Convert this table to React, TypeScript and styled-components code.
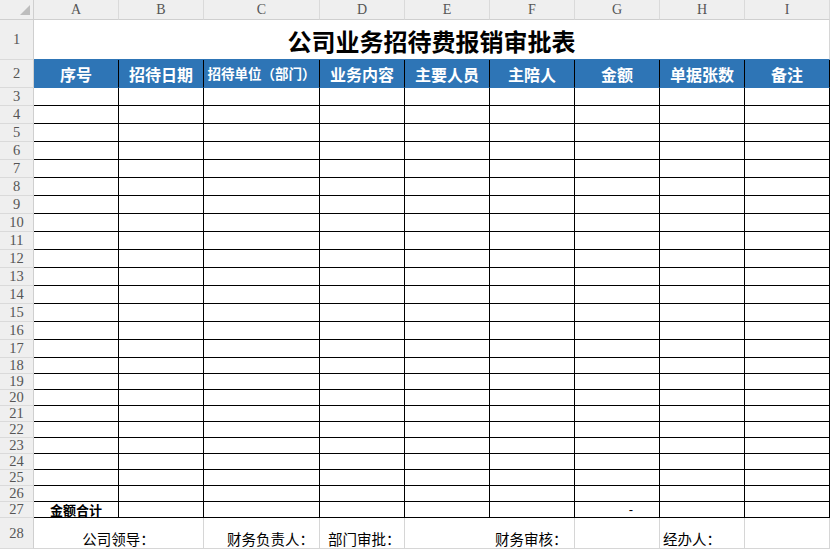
import React from "react";
import styled, { createGlobalStyle, css } from "styled-components";

const Global = createGlobalStyle`
  html, body { margin: 0; padding: 0; background: #ffffff; overflow: hidden; }
  * { box-sizing: border-box; }
`;

const CJK = `"Noto Sans CJK SC", "Noto Sans", sans-serif`;
const HEAD_FONT = `"Liberation Serif", "DejaVu Serif", serif`;
const BLUE = "#2E75B6";
const GRID = "#d6d6d6";

const Sheet = styled.div`
  display: grid;
  grid-template-columns: 34px 85px 85px 116px repeat(6, 85px);
  grid-template-rows: 20px 40px 28px repeat(15, 18px) repeat(10, 16px) 31px;
  width: 830px;
  height: 549px;
  background: #fff;
  font-family: ${CJK};
`;

const Corner = styled.div`
  position: relative;
  background: #efefef;
  border-right: 1px solid #cfcfcf;
  border-bottom: 1px solid #cfcfcf;
  &::after {
    content: "";
    position: absolute;
    left: 20px;
    top: 5px;
    width: 0;
    height: 0;
    border-left: 10px solid transparent;
    border-bottom: 10px solid #bdbdbd;
  }
`;

const ColHead = styled.div`
  display: flex;
  align-items: center;
  justify-content: center;
  background: #efefef;
  border-right: 1px solid #dadada;
  border-bottom: 1px solid #cfcfcf;
  font-family: ${HEAD_FONT};
  font-size: 14px;
  line-height: 1;
  color: #555;
  padding-top: 1px;
`;

const RowHead = styled.div`
  display: flex;
  align-items: center;
  justify-content: center;
  background: #efefef;
  border-right: 1px solid #cfcfcf;
  border-bottom: 1px solid #dadada;
  font-family: ${HEAD_FONT};
  font-size: 14.5px;
  line-height: 1;
  color: #555;
  overflow: hidden;
`;

const TitleCell = styled.div`
  grid-column: span 9;
  display: flex;
  align-items: center;
  justify-content: center;
  border-right: 1px solid ${GRID};
  border-bottom: 1px solid ${BLUE};
  font-size: 24px;
  font-weight: 700;
  color: #000;
  padding-top: 1px;
`;

const HeadCell = styled.div<{ $small?: boolean }>`
  display: flex;
  align-items: center;
  justify-content: center;
  background: ${BLUE};
  border-right: 1px solid #000;
  border-bottom: 1px solid ${BLUE};
  color: #fff;
  font-weight: 700;
  font-size: ${(p) => (p.$small ? "13.5px" : "16px")};
  line-height: 1;
  white-space: nowrap;
  overflow: hidden;
`;

const DataCell = styled.div`
  display: flex;
  align-items: center;
  justify-content: center;
  border-right: 1px solid #000;
  border-bottom: 1px solid #000;
  font-size: 14px;
  line-height: 1;
  color: #000;
  white-space: nowrap;
  overflow: hidden;
`;

const TotalLabel = styled(DataCell)`
  font-weight: 700;
  font-size: 13px;
  overflow: visible;
`;

const AmountDash = styled(DataCell)`
  justify-content: flex-end;
  padding-right: 26px;
  font-family: "Liberation Sans", sans-serif;
  font-size: 13px;
`;

const SignCell = styled.div<{ $span?: number; $pad?: number; $center?: boolean }>`
  grid-column: span ${(p) => p.$span ?? 1};
  display: flex;
  align-items: flex-end;
  justify-content: ${(p) => (p.$center ? "center" : "flex-start")};
  padding-bottom: 2px;
  ${(p) =>
    p.$pad !== undefined &&
    css`
      padding-left: ${p.$pad}px;
    `}
  border-right: 1px solid ${GRID};
  border-bottom: 1px solid ${GRID};
  font-size: 14.5px;
  line-height: 1;
  color: #000;
  white-space: nowrap;
`;

const columns = ["A", "B", "C", "D", "E", "F", "G", "H", "I"];
const headers = ["序号", "招待日期", "招待单位（部门）", "业务内容", "主要人员", "主陪人", "金额", "单据张数", "备注"];
const dataRows = Array.from({ length: 24 }, (_, i) => i + 3);

export default function App() {
  return (
    <>
      <Global />
      <Sheet>
        <Corner />
        {columns.map((c) => (
          <ColHead key={c}>{c}</ColHead>
        ))}

        <RowHead>1</RowHead>
        <TitleCell>公司业务招待费报销审批表</TitleCell>

        <RowHead>2</RowHead>
        {headers.map((h, i) => (
          <HeadCell key={h} $small={i === 2}>
            {h}
          </HeadCell>
        ))}

        {dataRows.map((r) => (
          <React.Fragment key={r}>
            <RowHead>{r}</RowHead>
            {columns.map((c) => (
              <DataCell key={c} />
            ))}
          </React.Fragment>
        ))}

        <RowHead>27</RowHead>
        <TotalLabel>金额合计</TotalLabel>
        <DataCell />
        <DataCell />
        <DataCell />
        <DataCell />
        <DataCell />
        <AmountDash>-</AmountDash>
        <DataCell />
        <DataCell />

        <RowHead>28</RowHead>
        <SignCell $span={2} $center>
          公司领导：
        </SignCell>
        <SignCell $pad={23}>财务负责人：</SignCell>
        <SignCell $pad={8}>部门审批：</SignCell>
        <SignCell $span={2} $pad={90}>
          财务审核：
        </SignCell>
        <SignCell />
        <SignCell $pad={3}>经办人：</SignCell>
        <SignCell />
      </Sheet>
    </>
  );
}
